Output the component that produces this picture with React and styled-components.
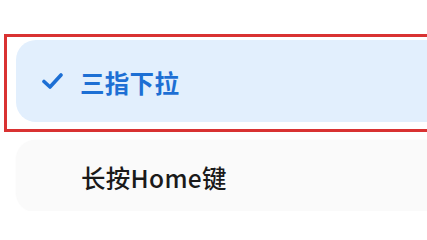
import React from "react";
import styled, { createGlobalStyle } from "styled-components";

const Global = createGlobalStyle`
  html, body { margin: 0; padding: 0; background: #ffffff; overflow: hidden; }
  body { font-family: "Noto Sans CJK SC", "Noto Sans", sans-serif; }
`;

const Page = styled.div`
  width: 427px;
  height: 211px;
  padding-top: 34px;
  padding-left: 4px;
  box-sizing: border-box;
  overflow: hidden;
`;

const Highlight = styled.div`
  width: 460px;
  border: 3px solid #d93232;
  padding: 3px 0 7px 9px;
  box-sizing: border-box;
`;

const Option = styled.div`
  display: flex;
  align-items: center;
  height: ${(p) => (p.$selected ? "82px" : "72px")};
  width: 460px;
  box-sizing: border-box;
  border-radius: 20px;
  padding-left: ${(p) => (p.$selected ? "26px" : "65px")};
  gap: 17px;
  background: ${(p) => (p.$selected ? "#e2effd" : "#fafafa")};
  box-shadow: ${(p) => (p.$selected ? "none" : "0 0 2px rgba(0,0,0,0.04)")};
  color: ${(p) => (p.$selected ? "#1d6fd4" : "#1a1a1a")};
  font-size: 24.5px;
  font-weight: ${(p) => (p.$selected ? 600 : 500)};
  letter-spacing: 0.3px;
`;

const Plain = styled.div`
  margin-top: 8px;
  margin-left: 12px;
`;

const Label = styled.span`
  line-height: 1;
  transform: translateY(2px);
`;

const Check = () => (
  <svg width="21" height="18" viewBox="0 0 21 18">
    <polyline
      points="2,9.5 8,15 19,3"
      fill="none"
      stroke="#1d6fd4"
      strokeWidth="3.6"
      strokeLinecap="round"
      strokeLinejoin="round"
    />
  </svg>
);

export default function App() {
  return (
    <>
      <Global />
      <Page>
        <Highlight>
          <Option $selected>
            <Check />
            <Label>三指下拉</Label>
          </Option>
        </Highlight>
        <Plain>
          <Option>
            <Label>长按Home键</Label>
          </Option>
        </Plain>
      </Page>
    </>
  );
}
